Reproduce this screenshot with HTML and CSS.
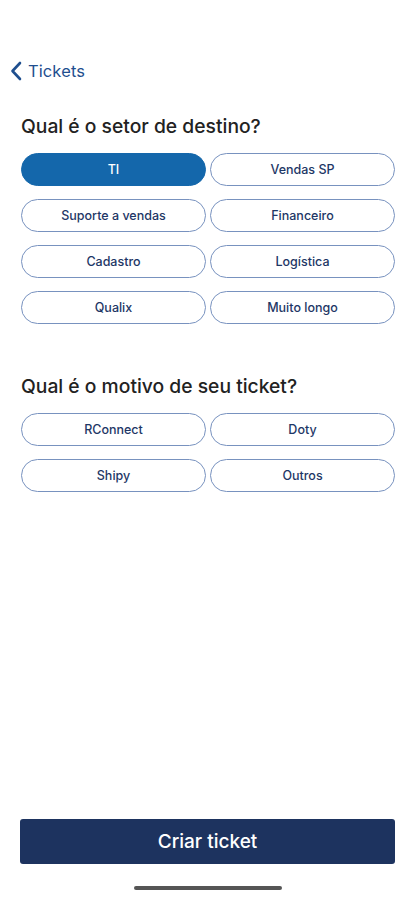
FILE: index.html
```html
<!DOCTYPE html>
<html lang="pt">
<head>
<meta charset="utf-8">
<link rel="stylesheet" href="styles.css">
</head>
<body>
<div class="screen">
  <header class="nav">
    <svg class="chev" width="12" height="20" viewBox="0 0 12 20"><path d="M10 2 L2.5 10 L10 18" fill="none" stroke="#1f4f8f" stroke-width="2.6" stroke-linecap="round" stroke-linejoin="round"/></svg>
    <span class="nav-title">Tickets</span>
  </header>
  <main class="content">
    <section class="group">
      <h2 class="question">Qual é o setor de destino?</h2>
      <div class="chips">
        <button class="chip selected">TI</button>
        <button class="chip">Vendas SP</button>
        <button class="chip">Suporte a vendas</button>
        <button class="chip">Financeiro</button>
        <button class="chip">Cadastro</button>
        <button class="chip">Logística</button>
        <button class="chip">Qualix</button>
        <button class="chip">Muito longo</button>
      </div>
    </section>
    <section class="group second">
      <h2 class="question">Qual é o motivo de seu ticket?</h2>
      <div class="chips">
        <button class="chip">RConnect</button>
        <button class="chip">Doty</button>
        <button class="chip">Shipy</button>
        <button class="chip">Outros</button>
      </div>
    </section>
  </main>
  <footer class="footer">
    <button class="cta">Criar ticket</button>
    <div class="home-indicator"></div>
  </footer>
</div>
</body>
</html>
```
FILE: styles.css
```css
* { box-sizing: border-box; }
html, body { margin: 0; padding: 0; background: #fff; }
body { font-family: Inter, "Noto Sans", "Liberation Sans", sans-serif; }
.screen {
  width: 415px;
  height: 900px;
  display: flex;
  flex-direction: column;
}
.nav {
  display: flex;
  align-items: center;
  gap: 6px;
  padding: 61px 0 0 10px;
  height: 81px;
}
.chev { display: block; }
.nav-title {
  font-size: 16.5px;
  color: #1f4f8f;
  font-weight: 400;
  letter-spacing: 0.1px;
}
.content {
  flex: 1;
  padding: 33px 20px 0 21px;
}
.question {
  margin: 0 0 15px;
  font-size: 19.3px;
  line-height: 24px;
  font-weight: 500;
  color: #222;
  letter-spacing: 0;
}
.group.second { margin-top: 50px; }
.chips {
  display: grid;
  grid-template-columns: 1fr 1fr;
  column-gap: 4px;
  row-gap: 13px;
}
.chip {
  height: 33px;
  border: 1.3px solid #7892bf;
  border-radius: 17px;
  background: #fff;
  color: #1e3766;
  font-family: Inter, "Noto Sans", sans-serif;
  font-size: 12.5px;
  font-weight: 500;
  padding: 0;
}
.chip.selected {
  background: #1467ab;
  border-color: #1467ab;
  color: #fff;
}
.footer {
  padding: 0 20px 0 20px;
  display: flex;
  flex-direction: column;
  align-items: center;
}
.cta {
  width: 375px;
  height: 45px;
  background: #1d335f;
  border: none;
  border-radius: 3px;
  color: #fff;
  font-family: Inter, "Noto Sans", sans-serif;
  font-size: 19px;
  font-weight: 500;
  margin-bottom: 22px;
}
.home-indicator {
  width: 148px;
  height: 4px;
  border-radius: 2px;
  background: #555;
  margin-bottom: 10px;
}
```
